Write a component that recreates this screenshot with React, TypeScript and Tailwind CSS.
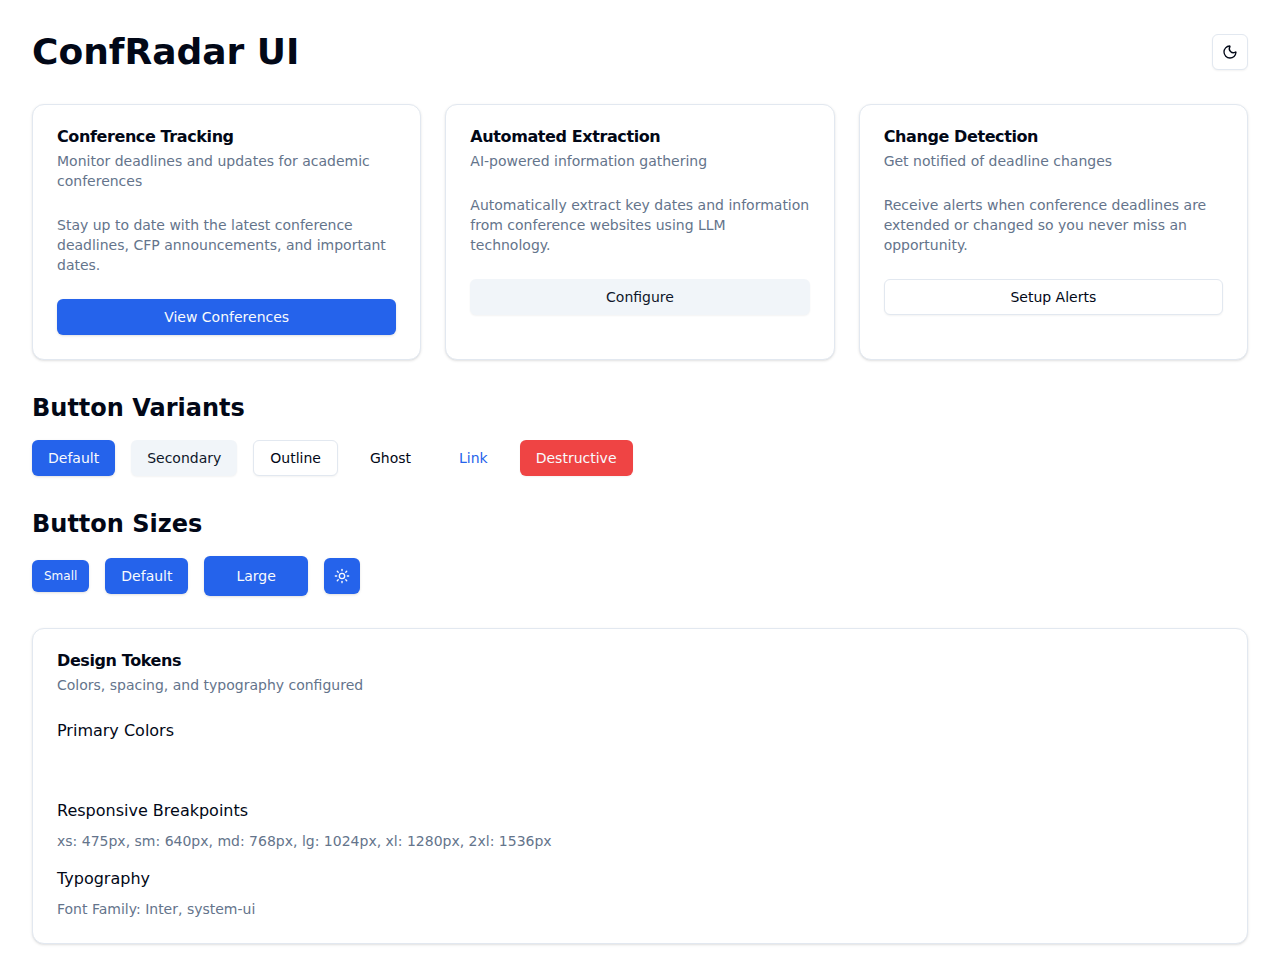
import React from 'react';
import { clsx } from 'clsx';
import { Moon, Sun } from 'lucide-react';

type Variant = 'default' | 'secondary' | 'outline' | 'ghost' | 'link' | 'destructive';
type Size = 'sm' | 'default' | 'lg' | 'icon';

const variants: Record<Variant, string> = {
  default: 'bg-[#2563eb] text-slate-50 shadow-sm hover:bg-[#1d4ed8]',
  secondary: 'bg-slate-100 text-[#0f172a] shadow-xs hover:bg-slate-200',
  outline: 'border border-[#e2e8f0] bg-white shadow-xs hover:bg-slate-100',
  ghost: 'hover:bg-slate-100',
  link: 'text-[#2563eb] underline-offset-4 hover:underline',
  destructive: 'bg-[#ef4444] text-slate-50 shadow-xs hover:bg-red-600',
};

const sizes: Record<Size, string> = {
  sm: 'h-8 px-3 text-xs',
  default: 'h-9 px-4 text-sm',
  lg: 'h-10 px-8 text-sm',
  icon: 'size-9 text-sm',
};

type ButtonProps = React.ComponentProps<'button'> & { variant?: Variant; size?: Size };

function Button({ variant = 'default', size = 'default', className, ...props }: ButtonProps) {
  return (
    <button
      type="button"
      className={clsx(
        'inline-flex items-center justify-center rounded-md font-medium whitespace-nowrap',
        variants[variant],
        sizes[size],
        className,
      )}
      {...props}
    />
  );
}

type CardProps = { title: string; description: string; children: React.ReactNode };

function Card({ title, description, children }: CardProps) {
  return (
    <div className="rounded-xl border border-[#e2e8f0] bg-white shadow-sm">
      <div className="flex flex-col gap-1.5 p-6">
        <h3 className="leading-4 font-semibold tracking-tight">{title}</h3>
        <p className="text-sm text-[#64748b]">{description}</p>
      </div>
      <div className="px-6 pb-6">{children}</div>
    </div>
  );
}

const features: { title: string; description: string; body: string; action: string; variant: Variant }[] = [
  {
    title: 'Conference Tracking',
    description: 'Monitor deadlines and updates for academic conferences',
    body: 'Stay up to date with the latest conference deadlines, CFP announcements, and important dates.',
    action: 'View Conferences',
    variant: 'default',
  },
  {
    title: 'Automated Extraction',
    description: 'AI-powered information gathering',
    body: 'Automatically extract key dates and information from conference websites using LLM technology.',
    action: 'Configure',
    variant: 'secondary',
  },
  {
    title: 'Change Detection',
    description: 'Get notified of deadline changes',
    body: 'Receive alerts when conference deadlines are extended or changed so you never miss an opportunity.',
    action: 'Setup Alerts',
    variant: 'outline',
  },
];

export default function App() {
  return (
    <main className="min-h-screen bg-white p-8 font-['DejaVu_Sans',sans-serif] text-[#020817]">
      <div className="flex flex-col gap-8">
        <header className="flex items-center justify-between">
          <h1 className="text-4xl font-bold">ConfRadar UI</h1>
          <Button variant="outline" size="icon" aria-label="Toggle theme">
            <Moon className="size-4" />
          </Button>
        </header>

        <div className="grid gap-6 md:grid-cols-2 lg:grid-cols-3">
          {features.map((f) => (
            <Card key={f.title} title={f.title} description={f.description}>
              <p className="text-sm text-[#64748b]">{f.body}</p>
              <Button variant={f.variant} className="mt-6 w-full">
                {f.action}
              </Button>
            </Card>
          ))}
        </div>

        <section className="flex flex-col gap-4">
          <h2 className="text-2xl font-semibold">Button Variants</h2>
          <div className="flex flex-wrap gap-4">
            <Button>Default</Button>
            <Button variant="secondary">Secondary</Button>
            <Button variant="outline">Outline</Button>
            <Button variant="ghost">Ghost</Button>
            <Button variant="link">Link</Button>
            <Button variant="destructive">Destructive</Button>
          </div>
        </section>

        <section className="flex flex-col gap-4">
          <h2 className="text-2xl font-semibold">Button Sizes</h2>
          <div className="flex flex-wrap items-center gap-4">
            <Button size="sm">Small</Button>
            <Button>Default</Button>
            <Button size="lg">Large</Button>
            <Button size="icon" aria-label="Light theme">
              <Sun className="size-4" />
            </Button>
          </div>
        </section>

        <Card title="Design Tokens" description="Colors, spacing, and typography configured">
          <div className="flex flex-col gap-4">
            <div>
              <h4 className="mb-2 font-medium">Primary Colors</h4>
              <div className="h-8" />
            </div>
            <div>
              <h4 className="mb-2 font-medium">Responsive Breakpoints</h4>
              <p className="text-sm text-[#64748b]">
                xs: 475px, sm: 640px, md: 768px, lg: 1024px, xl: 1280px, 2xl: 1536px
              </p>
            </div>
            <div>
              <h4 className="mb-2 font-medium">Typography</h4>
              <p className="text-sm text-[#64748b]">Font Family: Inter, system-ui</p>
            </div>
          </div>
        </Card>
      </div>
    </main>
  );
}
